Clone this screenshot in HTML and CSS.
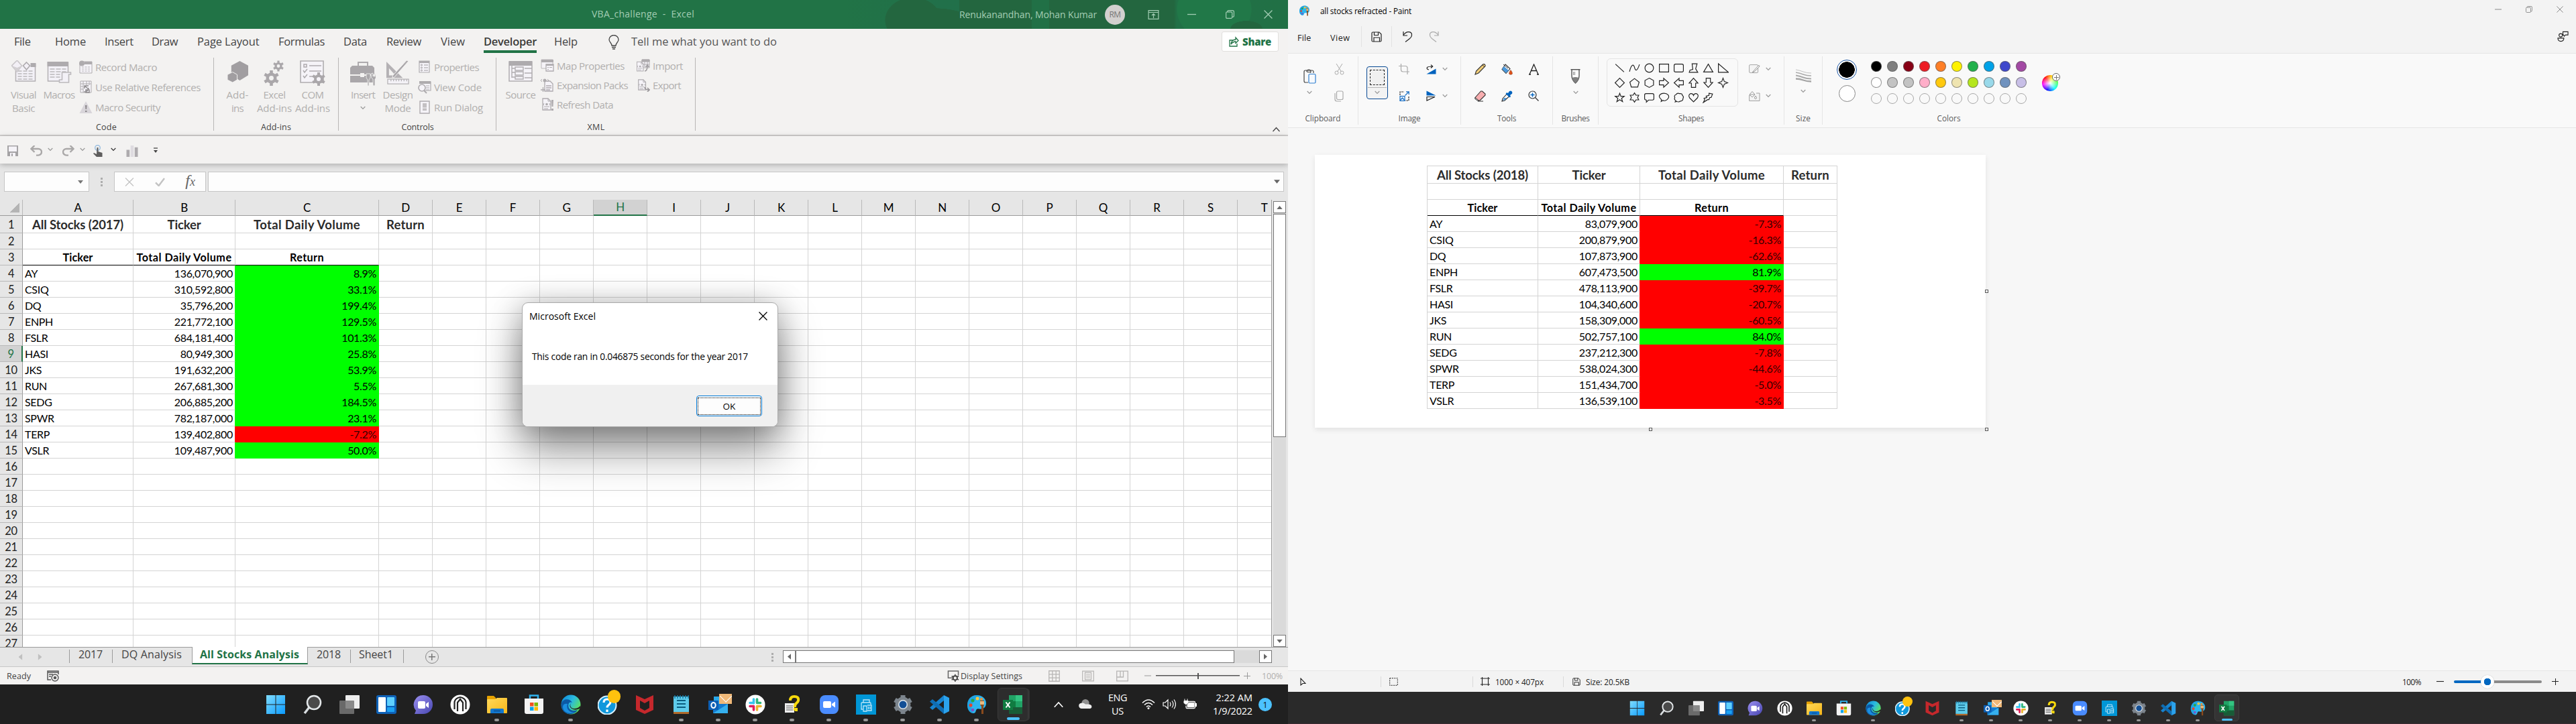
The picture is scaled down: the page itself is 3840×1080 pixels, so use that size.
FILE: index.html
```html
<!DOCTYPE html>
<html lang="en">
<head>
<meta charset="utf-8">
<title>Desktop</title>
<link rel="stylesheet" href="styles.css">
</head>
<body>
<svg class="defs" aria-hidden="true">
<defs>
<linearGradient id="gwin" x1="0" y1="0" x2="1" y2="1"><stop offset="0" stop-color="#7fdcff"/><stop offset="1" stop-color="#0a9bff"/></linearGradient>
<linearGradient id="gchat" x1="0" y1="0" x2="1" y2="1"><stop offset="0" stop-color="#9b8ff0"/><stop offset="1" stop-color="#4746b0"/></linearGradient>
<linearGradient id="gedge" x1="0" y1="0" x2="1" y2=".6"><stop offset="0" stop-color="#0a84d8"/><stop offset=".55" stop-color="#2bbbe0"/><stop offset="1" stop-color="#5fe35a"/></linearGradient>
<linearGradient id="gfold" x1="0" y1="0" x2="1" y2="1"><stop offset="0" stop-color="#ffd95a"/><stop offset="1" stop-color="#f7b61a"/></linearGradient>
</defs>
<!-- ribbon -->
<symbol id="vb" viewBox="0 0 36 34"><path d="M6 12v19h29V5" fill="#f3f1f7" stroke="#b3b0b3" stroke-width="1.5"/><path d="M28 4h8v6h-8z" fill="#aeabae"/><path d="M9 16h23M9 20h23M9 24h23M9 28h23" stroke="#bbb8bb" stroke-width="1.4" stroke-dasharray="6 2"/><path d="M8 0l7 8-7 9-8-9z" fill="#f3f0f6" stroke="#c9c6c9" stroke-width="1.6"/><path d="M0 8l8 3v6zM15 8l-7 3v6z" fill="#d3d0d3"/><path d="M22 3l5 5-5 6-5-6z" fill="#f3f0f6" stroke="#aeabae" stroke-width="1.6"/></symbol>
<symbol id="macros" viewBox="0 0 36 34"><path d="M1 3h30v28H1z" fill="#f3f1f7" stroke="#b3b0b3" stroke-width="1.5"/><path d="M0 2h31v7H0z" fill="#aeabae"/><path d="M4 13h24M4 17h24M4 21h15M4 25h15" stroke="#bbb8bb" stroke-width="1.5" stroke-dasharray="7 2"/><path d="M22 18h13v3h-3v12H18v-4h4z" fill="#f3f1f7" stroke="#bcb9bc" stroke-width="1.6"/></symbol>
<symbol id="rec" viewBox="0 0 20 20"><path d="M1 5h18v14H1zM5 2h14v3H5z" fill="#f5f3f8" stroke="#b0adb0"/><path d="M8 2h11v4H8z" fill="#aeabae"/><circle cx="4" cy="4.500" r="4" fill="#aeabae"/><path d="M4 10h13M4 13h13M4 16h13" stroke="#b5b2b5" stroke-dasharray="3 1.500"/></symbol>
<symbol id="rel" viewBox="0 0 20 20"><path d="M2 1h16v17H2zM6 1v17M11 1v6M2 5h16M2 9h4M2 13h4M15 1v6" fill="#f5f3f8" stroke="#aeabae"/><path d="M7 17q7 0 7-6M14 8H8v4M8 8l6 5M10 14h5v4h-5z" fill="none" stroke="#8f8c8f" stroke-width="1.500"/></symbol>
<symbol id="warn" viewBox="0 0 20 20"><path d="M10 1l9.500 18H.5z" fill="#d8d5da"/><path d="M9 7h2.500l-.5 6H9.500zM9 15h2.500v2H9z" fill="#8a878a"/></symbol>
<symbol id="hexes" viewBox="0 0 32 34"><path d="M19 1l13 7v15l-13 8-13-8V8z" fill="#a19ea1"/><path d="M8 18l7 4v8l-7 4-8-4v-8z" fill="#a19ea1" stroke="#f3f2f1" stroke-width="1"/></symbol>
<symbol id="gear" viewBox="0 0 20 20"><circle cx="10" cy="10" r="5" fill="none" stroke="#aaa7aa" stroke-width="4"/><path d="M10 0v4M10 16v4M1.300 5l3.500 2M15.200 13l3.500 2M1.300 15l3.500-2M15.200 7l3.500-2" stroke="#aaa7aa" stroke-width="4"/></symbol>
<symbol id="gears" viewBox="0 0 32 38"><use href="#gear" x="14" y="0" width="16" height="17"/><use href="#gear" x="0" y="15" width="23" height="23"/></symbol>
<symbol id="com" viewBox="0 0 38 38"><path d="M1 1h34v32H1z" fill="#f5f3f8" stroke="#b0adb0" stroke-width="1.600"/><path d="M6 6h4v4H6zM14 8h18M14 16h18M14 24h8M5 15l2 3 4-5M5 23l2 3 4-5" fill="none" stroke="#aeabae" stroke-width="1.500"/><use href="#gear" x="18" y="18" width="20" height="20"/></symbol>
<symbol id="toolbox" viewBox="0 0 38 38"><path d="M12 8V3h14v5" fill="none" stroke="#aeabae" stroke-width="2"/><path d="M3 8h30l3 3v10H0V11zM0 23h36v10H0z" fill="#aaa7aa"/><path d="M15 19h6v6h-6z" fill="#f3f2f1"/><path d="M24 20v6l2 3v9h2v-9l2-3v-6zM31 20q0 7 3 8v9q2 2 3 0v-9q3-2 0-9v5h-3v-5z" fill="#aaa7aa" stroke="#f3f2f1" stroke-width=".8"/></symbol>
<symbol id="design" viewBox="0 0 38 38"><path d="M1 2v25h25zM5 12l10 11H5z" fill="#b4b1b4" fill-rule="evenodd"/><path d="M35 1l-22 25-3 1 1-4L32 0z" fill="#aaa7aa" stroke="#f3f2f1"/><path d="M3 29h32v7H3zM8 29v3M12 29v3M16 29v3M20 29v3M24 29v3M28 29v3M32 29v3" fill="#f5f3f8" stroke="#b4b1b4" stroke-width="1.300"/></symbol>
<symbol id="props" viewBox="0 0 20 20"><path d="M2 1h15v17H2z" fill="#f5f3f8" stroke="#b0adb0" stroke-width="1.200"/><path d="M2 1h15v3H2z" fill="#aeabae"/><path d="M9 7h6M9 11h6M9 15h6" stroke="#9f9c9f"/><g fill="none" stroke="#a5a2a5"><circle cx="5.500" cy="7" r="1"/><circle cx="5.500" cy="11" r="1"/><circle cx="5.500" cy="15" r="1"/></g></symbol>
<symbol id="code" viewBox="0 0 20 20"><path d="M2 2h17v13H8" fill="#f5f3f8" stroke="#b0adb0" stroke-width="1.200"/><path d="M2 1h17v4H2z" fill="#aeabae"/><path d="M12 8h5M12 11h5M12 14h5" stroke="#b0adb0"/><circle cx="6" cy="11" r="5" fill="#f5f3f8" stroke="#aeabae" stroke-width="1.600"/><path d="M9 15l4 4" stroke="#aeabae" stroke-width="2"/></symbol>
<symbol id="dlg" viewBox="0 0 20 20"><path d="M3 1h14v18H3z" fill="#f5f3f8" stroke="#aeabae" stroke-width="1.400"/><path d="M7 4h6v11H7z" fill="#c3c0c3"/><path d="M6 11h8" stroke="#f5f3f8"/></symbol>
<symbol id="source" viewBox="0 0 36 34"><path d="M1 2h34v29H1z" fill="#f5f3f8" stroke="#b0adb0" stroke-width="1.500"/><path d="M1 1h34v7H1z" fill="#aeabae"/><path d="M5 1v25M5 12h5M5 18h5M5 25h5M10 10h12v5H10zM10 17h12v5H10zM10 24h12v4H10zM24 12h11M24 19h11M24 26h11" fill="none" stroke="#b0adb0" stroke-width="1.400"/></symbol>
<symbol id="map" viewBox="0 0 20 20"><path d="M1 1h17v13H1z" fill="#f5f3f8" stroke="#bbb8bb"/><path d="M1 1h18v4H1z" fill="#aeabae"/><path d="M8 8h11v10H8z" fill="#f5f3f8" stroke="#aeabae" stroke-width="1.300"/><path d="M8 8h11v2H8zM10 12h2v1h-2zM13 12h4v1h-4zM10 15h2v1h-2z" fill="#aeabae"/></symbol>
<symbol id="xdoc" viewBox="0 0 20 20"><path d="M3 1h8l4 4v13H3z" fill="#f5f3f8" stroke="#aeabae" stroke-width="1.300"/><path d="M11 1v4h4M5 13h8M5 16h6M5 8l-1 2 1 1M13 8l1 2-1 1" fill="none" stroke="#aeabae"/><circle cx="9" cy="9.500" r="1.800" fill="#aeabae"/></symbol>
<symbol id="expd" viewBox="0 0 20 20"><path d="M6 4h8l4 4v11H6z" fill="#f5f3f8" stroke="#aeabae" stroke-width="1.300"/><path d="M8 11h8M8 14h8M8 17h6M0 17h7M3.500 13v7" stroke="#aeabae" stroke-width="1.300"/><circle cx="6" cy="3" r="2.500" fill="#aeabae"/><path d="M2 1L0 3l2 2M10 1l2 2-2 2" stroke="#aeabae" fill="none"/></symbol>
<symbol id="refr" viewBox="0 0 20 20"><use href="#xdoc" width="20" height="20"/><path d="M16 3h3l-.5 10h-2zM16 16h3v3h-3z" fill="#aeabae"/></symbol>
<symbol id="imp" viewBox="0 0 20 20"><path d="M8 1h11v12H8z" fill="#f5f3f8" stroke="#aeabae"/><path d="M8 1h11v3H8zM12 4v8M16 4v8M8 8h11" stroke="#aeabae" fill="#aeabae"/><use href="#xdoc" x="-2" y="3" width="16" height="17"/><path d="M12 18q4 0 4-8m-2.500 2L16 9l2.500 3" fill="none" stroke="#a09da0" stroke-width="1.500"/></symbol>
<symbol id="exp" viewBox="0 0 20 20"><use href="#xdoc" width="18" height="20"/><path d="M12 13q0 4 6 4m-2-3l3 3-3 3" fill="none" stroke="#9a979a" stroke-width="1.600"/></symbol>
<symbol id="bulb" viewBox="0 0 16 22"><path d="M5 16c0-4-4-5-4-9a7 6.500 0 0114 0c0 4-4 5-4 9zM5 18.500h6M6 21h4" fill="none" stroke="#444" stroke-width="1.300"/></symbol>
<!-- window and quick access glyphs -->
<symbol id="chev" viewBox="0 0 8 6"><path d="M.7 1l3.300 3.500L7.300 1" fill="none" stroke="currentColor" stroke-width="1.200"/></symbol>
<symbol id="chevup" viewBox="0 0 12 8"><path d="M1 7l5-5.500L11 7" fill="none" stroke="currentColor" stroke-width="1.300"/></symbol>
<symbol id="floppy" viewBox="0 0 16 16"><path d="M0 0h16v16H0z" fill="#a5a3a5"/><path d="M2 1.500h12V9H2z" fill="#f5f3f8"/><path d="M4 11h8v5H4z" fill="#f5f3f8"/><path d="M6 12h2v4H6z" fill="#a5a3a5"/></symbol>
<symbol id="undo" viewBox="0 0 18 16"><path d="M1.500 5H12a5 4.800 0 010 9.600H9M6.500 0L1.500 5l5 5" fill="none" stroke="currentColor" stroke-width="2.400"/></symbol>
<symbol id="touch" viewBox="0 0 14 18"><circle cx="6.500" cy="4.500" r="3.800" fill="none" stroke="#9cbfe0" stroke-width="1.500"/><path d="M5.500 4h2v6l6 2v6H5l-5-5 1-1 4 2z" fill="#5f5e5e"/></symbol>
<symbol id="bars" viewBox="0 0 18 18"><path d="M0 7h5v11H0zM13 3h5v15h-5z" fill="#aeabae"/><path d="M6.500 0h5v18h-5z" fill="#dedbe0"/></symbol>
<symbol id="more" viewBox="0 0 8 10"><path d="M1 1h6" stroke="#444" stroke-width="1.300"/><path d="M1 4h6L4 8z" fill="#444"/></symbol>
<symbol id="min" viewBox="0 0 12 12"><path d="M0 6h12" stroke="currentColor" stroke-width="1.200"/></symbol>
<symbol id="restore" viewBox="0 0 12 12"><path d="M2.500 2.500V1.800Q2.700.6 4 .6h5.500q2 0 2 2V8q0 1.600-2 1.600M.6 4Q.6 2.600 2 2.600h5.500Q9 2.600 9 4v6q0 1.400-1.500 1.400H2Q.6 11.400.6 10z" fill="none" stroke="currentColor" stroke-width="1.100"/></symbol>
<symbol id="close" viewBox="0 0 12 12"><path d="M.5.5l11 11M11.500.5l-11 11" stroke="currentColor" stroke-width="1.200"/></symbol>
<symbol id="ribopt" viewBox="0 0 16 14"><path d="M.6.6h14.800v12.800H.6zM.6 3.500h14.800M8 12V6M5.500 8L8 5.500 10.500 8" fill="none" stroke="currentColor" stroke-width="1.200"/></symbol>
<symbol id="share" viewBox="0 0 15 16"><path d="M6 6H1v9h11v-4M3 12q1-7 7-7V2l4 4.500-4 4V8Q6 8 3 12z" fill="none" stroke="#217346" stroke-width="1.300"/></symbol>
<symbol id="tri" viewBox="0 0 10 6"><path d="M0 0h10L5 6z" fill="currentColor"/></symbol>
<symbol id="tick" viewBox="0 0 16 14"><path d="M1 8l5 5L15 1" fill="none" stroke="#c3c3c3" stroke-width="2.600"/></symbol>
<symbol id="recs" viewBox="0 0 18 17"><path d="M1 1h16v2H1zM1 1v13h5M17 1v5M3 6h6M3 9h3" fill="none" stroke="#555" stroke-width="1.500"/><circle cx="12" cy="11" r="5" fill="#f3f2f1" stroke="#555" stroke-width="1.400"/><circle cx="12" cy="11" r="2.300" fill="#555"/></symbol>
<symbol id="disp" viewBox="0 0 18 18"><path d="M9 12H1V1h16v7" fill="none" stroke="#666" stroke-width="1.600"/><g fill="none" stroke="#444"><circle cx="12" cy="12" r="3.300" stroke-width="2"/><path d="M12 6v3M12 15v3M6.500 9l2.500 1.500M15 13.500l2.500 1.500M6.500 15L9 13.500M15 10.500L17.500 9" stroke-width="1.600"/></g></symbol>
<symbol id="v1" viewBox="0 0 16 16"><path d="M.7.7h14.600v14.600H.7zM5.500.7v14.600M10.500.7v14.600M.7 5.500h14.600M.7 10.500h14.600" fill="none" stroke="#b7b5b4" stroke-width="1.200"/></symbol>
<symbol id="v2" viewBox="0 0 18 16"><path d="M.7.7h16.600v14.600H.7zM4.500 2.700h9v10.600h-9zM6 5.500h6M6 8h6M6 10.500h6" fill="none" stroke="#b7b5b4" stroke-width="1.200"/></symbol>
<symbol id="v3" viewBox="0 0 18 16"><path d="M.7.7h16.600v14.600H.7zM.7 9.500h9.800V.7M6 .7v8.800M10.500 9.500" fill="none" stroke="#b7b5b4" stroke-width="1.300"/></symbol>
<!-- Paint -->
<symbol id="ppal" viewBox="0 0 30 30"><path d="M15 1C6 1 1 8 1 16s5 12 9 12c4 0 3-4 5-6s5 1 9-1c3-1 5-4 5-8 0-7-6-12-14-12z" fill="#2db5ee"/><path d="M15 1C6 1 1 8 1 16s5 12 9 12q-6-8 0-17t12-9q-4-1-7-1z" fill="#1090d8" opacity=".45"/><circle cx="16" cy="6" r="2.500" fill="#ffc83d"/><circle cx="9" cy="9" r="2.500" fill="#28a745"/><circle cx="6" cy="16" r="2.500" fill="#e8442c"/><circle cx="9" cy="23" r="2.300" fill="#7d4fc5"/><circle cx="22" cy="7" r="2" fill="#f59331"/><path d="M20 9h6v6l-1 3v11h-3V18l-2-3z" fill="#8a4a1c"/><path d="M20 10h6v5h-6z" fill="#e9b87c"/></symbol>
<symbol id="psave" viewBox="0 0 16 16"><path d="M1 2.500Q1 1 2.500 1H12l3 3v9.500q0 1.500-1.500 1.500h-11Q1 15 1 13.500zM4.500 1v4.500h6V1M4 15V9h8.500v6" fill="none" stroke="#222" stroke-width="1.200"/></symbol>
<symbol id="pundo" viewBox="0 0 15 17"><path d="M1 1v6h6M1 6.500C6-1 14 1 13.500 6.500q0 2.500-3 5L4 16.500" fill="none" stroke="currentColor" stroke-width="1.200"/></symbol>
<symbol id="paste" viewBox="0 0 19 22"><path d="M7 20H3q-2 0-2-2V4q0-2 2-2h10q2 0 2 2v2M5 3.500Q5 1 8 1t3 2.500-1 1H6z" fill="none" stroke="#444" stroke-width="1.200"/><rect x="8" y="7.500" width="10" height="13.500" rx="1.500" fill="#f6f9fd" stroke="#2f7fd0" stroke-width="1.200"/></symbol>
<symbol id="cut" viewBox="0 0 15 17"><path d="M3 0l7.500 12M12 0L4.500 12" stroke="#aaa"/><circle cx="3.500" cy="13.500" r="2.500" fill="none" stroke="#aaa"/><circle cx="11.500" cy="13.500" r="2.500" fill="none" stroke="#aaa"/></symbol>
<symbol id="copy" viewBox="0 0 14 17"><rect x="3.500" y="1" width="9.500" height="12.500" rx="2" fill="none" stroke="#aaa" stroke-width="1.200"/><path d="M1 4v9q0 3 3 3h6" fill="none" stroke="#aaa" stroke-width="1.200"/></symbol>
<symbol id="crop" viewBox="0 0 16 16"><path d="M0 3.500h10q3 0 3 3V16M3.500 0v9q0 3 3 3H16" fill="none" stroke="#aaa" stroke-width="1.200"/></symbol>
<symbol id="resize" viewBox="0 0 15 15"><path d="M1 6V1h6M14 8v6H9" fill="none" stroke="#222" stroke-width="1.200" stroke-dasharray="2.500 1"/><rect x="1" y="7.500" width="7" height="7" fill="#eaf3fc" stroke="#1a6fc4" stroke-width="1.200"/><path d="M1 14l3.500-4 3.500 4M8.500 6.500L14 1M10 .8h4.200V5" fill="none" stroke="#1a6fc4" stroke-width="1.200"/></symbol>
<symbol id="rot" viewBox="0 0 15 15"><path d="M14.500 6.500V14.500H.5z" fill="#0063be"/><path d="M4 8Q0 7 1.500 4.500 3 3 9.500 3M7 .6L9.700 3 7 5.500" fill="none" stroke="#222" stroke-width="1.200"/></symbol>
<symbol id="flip" viewBox="0 0 15 16"><path d="M.5.5v7h14z" fill="#0063be"/><path d="M1 15V9.500h12z" fill="none" stroke="#222" stroke-width="1.200"/></symbol>
<symbol id="pencil" viewBox="0 0 17 17"><path d="M1 16l1.500-5L12.500 1q2-.8 3 .3 1 1.200.3 2.700L6 14z" fill="#f1cd78" stroke="#333" stroke-width="1.100"/><path d="M12 2l3 3" stroke="#333"/></symbol>
<symbol id="bucket" viewBox="0 0 17 17"><path d="M6 1l7 6.500-6 7-6-6z" fill="#fff" stroke="#333" stroke-width="1.100"/><path d="M4 4l7 6-4 4-6-6z" fill="#4b97da"/><path d="M3 1l7 6" stroke="#333"/><path d="M14 9.500q5 6.500 0 6.800-5-.3 0-6.800z" fill="#e0521b" stroke="#7a2a0a" stroke-width=".5"/></symbol>
<symbol id="letter" viewBox="0 0 15 17"><path d="M1 16L7.500 1 14 16M3.500 10.500h8M0 16h3M12 16h3" fill="none" stroke="#222" stroke-width="1.300"/></symbol>
<symbol id="eraser" viewBox="0 0 17 17"><path d="M1 10.500L9.500 1h2L16 5v2L8 15H5.500L1 12z" fill="#f8aeb0" stroke="#333" stroke-width="1.100"/><path d="M1 10.500l6 5H5L1 12.500z" fill="#fff" stroke="#333"/><path d="M5 16h8" stroke="#333"/></symbol>
<symbol id="picker" viewBox="0 0 17 17"><path d="M1 16l1-4 6.500-7 3.500 3.500L5 15z" fill="#fff" stroke="#333" stroke-width="1.100"/><path d="M4 11h4l-3 3.500H2z" fill="#4b97da"/><path d="M8 3l2 1 2-3q3-1.500 4 1t-1 3.500l-2 1.500 1 2-1.500 1.500L6.500 5z" fill="#0063be"/></symbol>
<symbol id="mag" viewBox="0 0 16 16"><circle cx="6.500" cy="6.500" r="5.500" fill="#f4f9fe" stroke="#333" stroke-width="1.200"/><path d="M10.500 10.500L15.500 15.500" stroke="#333" stroke-width="1.300"/><path d="M6.500 3.500v6M3.500 6.500h6" stroke="#0063be" stroke-width="1.300"/></symbol>
<symbol id="brush" viewBox="0 0 14 22"><path d="M0 .8h14M1.500 1v9q0 6 5.500 11 5.500-5 5.500-11V1" fill="#fff" stroke="#555" stroke-width="1.400"/><path d="M2 13q5-2 10 0-1 4-5 8-4-4-5-8z" fill="#808080"/><path d="M4 4v5M6 4v5" stroke="#888"/></symbol>
<symbol id="sout" viewBox="0 0 17 14"><rect x=".6" y=".6" width="13" height="12" rx="1.500" fill="#f4f4f4" stroke="#a6a6a6"/><path d="M6 11l8-9q2-1 2 1L8 11l-3 1z" fill="#fafafa" stroke="#999"/></symbol>
<symbol id="sfill" viewBox="0 0 17 15"><path d="M4 6H.6v8.400H16V3h-5" fill="#f4f4f4" stroke="#a0a0a0"/><path d="M5 .5L9 5 5 9 1 5zM1 5h8M10 7q3 4 0 4.500-3-.5 0-4.500z" fill="#fafafa" stroke="#999"/></symbol>
<symbol id="size" viewBox="0 0 23 20"><path d="M0 1q6 1 11 3t12 2" fill="none" stroke="#bbb" stroke-width=".9"/><path d="M0 5q6 1 11 3t12 2" fill="none" stroke="#aaa" stroke-width="1.400"/><path d="M0 9.500q6 1 11 3t12 2" fill="none" stroke="#aaa" stroke-width="2"/><path d="M0 14.500q6 0 11 2t12 2" fill="none" stroke="#a5a5a5" stroke-width="2.300"/></symbol>
<symbol id="fb" viewBox="0 0 18 17"><circle cx="5.500" cy="6.500" r="2.700" fill="none" stroke="#222" stroke-width="1.200"/><path d="M1 11h9.500q0 5-4.700 5T1 11zM9 1h8v5h-4l-2 2-1-2H9z" fill="none" stroke="#222" stroke-width="1.200"/></symbol>
<symbol id="cur" viewBox="0 0 9 12"><path d="M1 1v10l3-2.500h4z" fill="none" stroke="#222" stroke-width="1.100"/></symbol>
<symbol id="dash" viewBox="0 0 13 12"><rect x=".7" y=".7" width="11.600" height="10.600" fill="none" stroke="#222" stroke-dasharray="2 1.300"/></symbol>
<symbol id="dims" viewBox="0 0 14 13"><path d="M2.500 0v13M11.500 0v13M0 2h14M0 11h14" stroke="#222" stroke-width="1.100"/></symbol>
<!-- Paint shapes -->
<symbol id="s0" viewBox="0 0 16 16"><path d="M2 2.500l12 11"/></symbol>
<symbol id="s1" viewBox="0 0 16 16"><path d="M1 13C4 1 7 3 8 7s3 8 7-4"/></symbol>
<symbol id="s2" viewBox="0 0 16 16"><circle cx="8" cy="8" r="6"/></symbol>
<symbol id="s3" viewBox="0 0 16 16"><path d="M1.500 2.500h13v11h-13z"/></symbol>
<symbol id="s4" viewBox="0 0 16 16"><rect x="1.500" y="2.500" width="13" height="11" rx="2"/></symbol>
<symbol id="s5" viewBox="0 0 16 16"><path d="M6 2h7l-2 7 3 5H2l1-3 4-1z"/></symbol>
<symbol id="s6" viewBox="0 0 16 16"><path d="M8 2.500L14.500 13.500h-13z"/></symbol>
<symbol id="s7" viewBox="0 0 16 16"><path d="M1.500 2v12h14z"/></symbol>
<symbol id="s8" viewBox="0 0 16 16"><path d="M8 1.500L14.500 8 8 14.500 1.500 8z"/></symbol>
<symbol id="s9" viewBox="0 0 16 16"><path d="M8 2l6.500 5-2 7h-9l-2-7z"/></symbol>
<symbol id="s10" viewBox="0 0 16 16"><path d="M8 1.500l6 3.300v6.400l-6 3.300-6-3.300V4.800z"/></symbol>
<symbol id="s11" viewBox="0 0 16 16"><path d="M1.500 5h6V1.800L14.500 8l-7 6.200V11h-6z"/></symbol>
<symbol id="s12" viewBox="0 0 16 16"><path d="M14.500 5h-6V1.800L1.500 8l7 6.200V11h6z"/></symbol>
<symbol id="s13" viewBox="0 0 16 16"><path d="M5 14.500v-6H1.800L8 1.500l6.200 7H11v6z"/></symbol>
<symbol id="s14" viewBox="0 0 16 16"><path d="M5 1.500v6H1.800L8 14.500l6.200-7H11v-6z"/></symbol>
<symbol id="s15" viewBox="0 0 16 16"><path d="M8 1.500l1.800 4.700L14.500 8 9.800 9.800 8 14.500 6.200 9.800 1.500 8l4.700-1.800z"/></symbol>
<symbol id="s16" viewBox="0 0 16 16"><path d="M8 2l1.600 4.300h4.700l-3.700 2.900 1.400 4.600L8 11l-4 2.800 1.400-4.600L1.700 6.300h4.700z"/></symbol>
<symbol id="s17" viewBox="0 0 16 16"><path d="M8 1.500l2 3.200h4L12.300 8l1.700 3.300h-4L8 14.500l-2-3.200H2L3.700 8 2 4.700h4z"/></symbol>
<symbol id="s18" viewBox="0 0 16 16"><path d="M3.500 2.500h9q2 0 2 2v5q0 2-2 2H7l-3 3v-3q-2.500 0-2.500-2v-5q0-2 2-2z"/></symbol>
<symbol id="s19" viewBox="0 0 16 16"><path d="M4 13.500l.5-2.500C-2 6 3 2 8 2s8 3.500 6 7-6 4-7.500 3z"/></symbol>
<symbol id="s20" viewBox="0 0 16 16"><path d="M3 14l1-1.500Q1 11 2.500 8 1 5 4 4q2-3 5-1.500 4-.5 4 2.500 2.500 2 1 4 0 4-3.500 4-3 2-5 .5z"/></symbol>
<symbol id="s21" viewBox="0 0 16 16"><path d="M8 14L2.500 8.500Q0 4 4 2.500q3-.5 4 2.500 1-3 4-2.500 4 1.500 1.500 6z"/></symbol>
<symbol id="s22" viewBox="0 0 16 16"><path d="M9 2l5 1-2 5h-2l-1 3H7l-6 4 2-4-1-2 4-1-1-2 4-1z"/></symbol>
<!-- taskbar -->
<symbol id="t-win" viewBox="0 0 30 30"><path d="M1 1h13.500v13.500H1zM15.500 1H29v13.500H15.500zM1 15.500h13.500V29H1zM15.500 15.500H29V29H15.500z" fill="url(#gwin)"/></symbol>
<symbol id="t-search" viewBox="0 0 30 30"><path d="M10 19l-7 9" stroke="#d8dde0" stroke-width="3.500"/><circle cx="17" cy="12" r="10" fill="#4a4a4a" stroke="#e4e8ea" stroke-width="2.500"/></symbol>
<symbol id="t-view" viewBox="0 0 30 30"><rect x="9" y="1" width="21" height="20" rx="1" fill="#eee"/><rect y="9" width="22" height="20" rx="1" fill="#777" opacity=".85"/></symbol>
<symbol id="t-widg" viewBox="0 0 30 30"><rect y="1" width="30" height="28" rx="3" fill="#0e62b8"/><rect x="3" y="4" width="11" height="22" rx="1" fill="#fff"/><rect x="16" y="4" width="11" height="13" rx="1" fill="#5fd0ff"/><rect x="16" y="19" width="11" height="7" rx="1" fill="#1ba1f3"/></symbol>
<symbol id="t-chat" viewBox="0 0 30 30"><path d="M15 1a14 14 0 110 28H2l2-5A14 14 0 0115 1z" fill="url(#gchat)"/><rect x="7" y="10" width="11" height="11" rx="2" fill="#fff"/><path d="M19 14l4-3v9l-4-3z" fill="#fff"/></symbol>
<symbol id="t-arch" viewBox="0 0 30 30"><circle cx="15" cy="15" r="14.500" fill="#fff"/><path d="M11 25V12l4-5 4 5v13M6.500 22V11q1.500-6 8.500-7 7 1 8.500 7v11" fill="none" stroke="#222" stroke-width="2.200"/></symbol>
<symbol id="t-fold" viewBox="0 0 30 30"><path d="M0 3q0-1 1-1h9l3 3v5H0z" fill="#e6a100"/><path d="M0 8q0-1 1-1h11l3-2h14q1 0 1 1v21q0 1-1 1H1q-1 0-1-1z" fill="url(#gfold)"/><path d="M5 28v-5q0-2 2-2h16q2 0 2 2v5z" fill="#1277cf"/><path d="M10 24.500h10" stroke="#0a4e90" stroke-width="1.500"/></symbol>
<symbol id="t-store" viewBox="0 0 30 30"><path d="M9 6V1.500h12V6" fill="none" stroke="#2fb4f0" stroke-width="2.500"/><path d="M1 6h28v20q0 3-3 3H4q-3 0-3-3z" fill="#f4f4f4"/><path d="M9 12h5.500v5.500H9z" fill="#f25022"/><path d="M15.500 12H21v5.500h-5.500z" fill="#7fba00"/><path d="M9 18.500h5.500V24H9z" fill="#00a4ef"/><path d="M15.500 18.500H21V24h-5.500z" fill="#ffb900"/></symbol>
<symbol id="t-edge" viewBox="0 0 30 30"><circle cx="15" cy="15" r="14.500" fill="url(#gedge)"/><path d="M1 13C4 5 14 6 17 12c-5-2-7 3-5 8 2 4 8 5 13 3-4 7-14 8-20 3Q0 21 1 13z" fill="#0c59a4"/><path d="M17 12c-5 2-3 9 3 9 3 0 6-1 9-4l1 3q-8 5-14 1c-4-3-3-7 1-9z" fill="#222"/><path d="M10 14c-3 8 4 14 11 12-6 4-18 2-18-8q1-5 7-4z" fill="#1b8fe0"/></symbol>
<symbol id="t-help" viewBox="0 0 30 30"><circle cx="14" cy="16" r="13.500" fill="#1098dc" stroke="#d9f0fc" stroke-width="2"/><path d="M9 12q0-5 5-5t5 4.500c0 4-5 3.500-5 8M14 22.500v3.500" fill="none" stroke="#fff" stroke-width="3.200"/></symbol>
<symbol id="t-mc" viewBox="0 0 30 30"><path d="M2 1l13 6 13-6v22l-13 6-13-6zM8 9v11l7 4 7-4V9l-7 4z" fill="#c5282c" fill-rule="evenodd"/></symbol>
<symbol id="t-note" viewBox="0 0 30 30"><path d="M3 3h23v23H3z" fill="#5ecbea"/><path d="M3 26h23v3H3z" fill="#b0692a"/><path d="M8 9h13M8 14h13M8 19h13" stroke="#0b5d80" stroke-width="1.800"/><path d="M5 1v5M9 1v5M13 1v5M17 1v5M21 1v5M25 1v5" stroke="#137aa6" stroke-width="1.500"/></symbol>
<symbol id="t-out" viewBox="0 0 30 30"><path d="M8 3h18v13H8z" fill="#28a8ea"/><path d="M7 14h22v14H7z" fill="#1279cf"/><path d="M7 28l22-14v14z" fill="#35b0ee"/><path d="M0 9h15v14H0z" fill="#0c5fb5"/><ellipse cx="7.500" cy="16" rx="3.200" ry="4" fill="none" stroke="#fff" stroke-width="2"/></symbol>
<symbol id="t-slack" viewBox="0 0 30 30"><circle cx="15" cy="15" r="14.500" fill="#fff"/><g stroke-width="3.600" stroke-linecap="round"><path d="M12.500 7v6M7 12.500h5" stroke="#36c5f0"/><path d="M17.500 7v5M17.500 12.500h5" stroke="#2eb67d"/><path d="M17.500 17.500h5.500M17.500 18v5" stroke="#ecb22e"/><path d="M7 17.500h5.500M12.500 18v5" stroke="#e01e5a"/></g></symbol>
<symbol id="t-qdoc" viewBox="0 0 30 30"><path d="M4 13h14v14H4z" fill="#eee"/><path d="M6 17h10M6 20h10M6 23h10" stroke="#555" stroke-width="1.200"/><path d="M12 9q0-6 6-6 7 0 6 6c-1 5-6 3-5 10M17 22h4v3" fill="none" stroke="#f7d90c" stroke-width="4"/></symbol>
<symbol id="t-zoom" viewBox="0 0 30 30"><rect x="1" y="1" width="28" height="28" rx="8" fill="#4a8cff"/><rect x="6" y="10" width="12" height="10" rx="2" fill="#fff"/><path d="M19 14l5-3.500v9L19 16z" fill="#fff"/></symbol>
<symbol id="t-prn" viewBox="0 0 30 30"><path d="M0 0h30v30H0z" fill="#0096d6"/><path d="M11 12V8h9v4M10 22H8v-9q0-1 1-1h12q1 0 1 1v2M11 17h5v8h-5zM17 16h6v8h-6M18.500 18v4M21 18v4" fill="none" stroke="#bfe6f8" stroke-width="1.300"/></symbol>
<symbol id="t-set" viewBox="0 0 30 30"><g stroke="#7d858d" fill="#7d858d"><circle cx="15" cy="15" r="11"/><path d="M15 1v28M3 8l24 14M3 22L27 8" stroke-width="7"/></g><circle cx="15" cy="15" r="7" fill="#dfe6ec"/><circle cx="15" cy="15" r="5.500" fill="#134f96"/></symbol>
<symbol id="t-code" viewBox="0 0 30 30"><path d="M21 1l8 4v20l-8 4z" fill="#2ba2ec"/><path d="M21 1v8L4 23l-4-3.500z" fill="#1683cf"/><path d="M21 29v-8L4 7 0 10.500z" fill="#0f6db3"/></symbol>
<symbol id="t-xl" viewBox="0 0 30 30"><path d="M9 1h20v28H9z" fill="#21a366"/><path d="M19 1h10v9H19z" fill="#33c481"/><path d="M9 19h20v10H9z" fill="#185c37"/><path d="M9 10h10v9H9z" fill="#107c41"/><path d="M0 8h15v15H0z" fill="#107c41"/><path d="M4.500 11.500l6 8M10.500 11.500l-6 8" stroke="#fff" stroke-width="2"/></symbol>
<symbol id="cloud" viewBox="0 0 22 16"><circle cx="11" cy="6" r="6" fill="#8f8f8f"/><path d="M5 15a4.500 4.500 0 010-9q3-1 6 2l4 0q6 0 6 4 0 3-4 3z" fill="#eee"/></symbol>
<symbol id="wifi" viewBox="0 0 20 16"><path d="M1 6q9-9 18 0M4 9q6-6 12 0M7 12q3-3 6 0" fill="none" stroke="#fff" stroke-width="1.500"/><circle cx="10" cy="14" r="1.500" fill="#fff"/></symbol>
<symbol id="vol" viewBox="0 0 20 16"><path d="M1 5.500h3l4-4v13l-4-4H1zM11 5q2 3 0 6M14 3q4 5 0 10M17 1q5 7 0 14" fill="none" stroke="#fff" stroke-width="1.200"/></symbol>
<symbol id="bat" viewBox="0 0 20 16"><path d="M7 4h9q1.500 0 1.500 1.500v7Q17.500 14 16 14H5q-1 0-1-2v-2" fill="none" stroke="#fff" stroke-width="1.300"/><path d="M8 6h8v6H6V9zM18 7h2v4h-2zM1 3h6v3L5 8H3L1 6zM2 0v3M6 0v3" fill="#fff" stroke="#fff"/></symbol>
</svg>

<div class="desktop">
<!-- ===== left monitor ===== -->
<section class="screen excel">
  <header class="titlebar">
    <span class="doc" data-w="153">VBA_challenge&nbsp; -&nbsp; Excel</span>
    <div class="account">
      <span data-w="205">Renukanandhan, Mohan Kumar</span>
      <b class="avatar">RM</b>
      <svg width="17" height="14"><use href="#ribopt"/></svg>
      <svg width="13" height="13"><use href="#min"/></svg>
      <svg width="13" height="13"><use href="#restore"/></svg>
      <svg width="13" height="13"><use href="#close"/></svg>
    </div>
  </header>
  <nav class="tabs">
    <span class="c-file"><a data-w="24.500">File</a></span><span class="c-home"><a data-w="46">Home</a></span><span class="c-ins"><a data-w="43">Insert</a></span><span class="c-draw"><a data-w="39">Draw</a></span><span class="c-page"><a data-w="92.500">Page Layout</a></span><span class="c-form"><a data-w="69">Formulas</a></span><span class="c-data"><a data-w="35">Data</a></span><span class="c-rev"><a data-w="52">Review</a></span><span class="c-view"><a data-w="36">View</a></span><span class="c-dev"><a class="on" data-w="79">Developer</a></span><span class="c-help"><a data-w="35">Help</a></span>
    <svg width="16" height="22"><use href="#bulb"/></svg>
    <a class="tell" data-w="217">Tell me what you want to do</a>
    <button class="share"><svg width="15" height="16"><use href="#share"/></svg><b data-w="43">Share</b></button>
  </nav>
  <div class="ribbon">
    <div class="group g-code"><div class="body">
      <div class="big w54"><svg width="37" height="34"><use href="#vb"/></svg><span data-w="38">Visual</span><span data-w="34">Basic</span></div>
      <div class="big w52"><svg width="37" height="34"><use href="#macros"/></svg><span data-w="47">Macros</span></div>
      <div class="list"><div><svg width="20" height="20"><use href="#rec"/></svg><span data-w="92">Record Macro</span></div><div><svg width="20" height="20"><use href="#rel"/></svg><span data-w="157">Use Relative References</span></div><div><svg width="20" height="20"><use href="#warn"/></svg><span data-w="97">Macro Security</span></div></div>
    </div><footer><span data-w="31">Code</span></footer></div>
    <div class="group g-add"><div class="body">
      <div class="big w52"><svg width="31" height="33"><use href="#hexes"/></svg><span data-w="33">Add-</span><span data-w="18">ins</span></div>
      <div class="big w58"><svg width="32" height="38"><use href="#gears"/></svg><span data-w="33">Excel</span><span data-w="52">Add-ins</span></div>
      <div class="big w56"><svg width="38" height="38"><use href="#com"/></svg><span data-w="33">COM</span><span data-w="52">Add-ins</span></div>
    </div><footer><span data-w="45">Add-ins</span></footer></div>
    <div class="group g-ctl"><div class="body">
      <div class="big w52"><svg width="38" height="38"><use href="#toolbox"/></svg><span data-w="36">Insert</span><svg class="dd" width="8" height="6"><use href="#chev"/></svg></div>
      <div class="big w52"><svg width="37" height="37"><use href="#design"/></svg><span data-w="45">Design</span><span data-w="39">Mode</span></div>
      <div class="list"><div><svg width="20" height="20"><use href="#props"/></svg><span data-w="67">Properties</span></div><div><svg width="20" height="20"><use href="#code"/></svg><span data-w="71">View Code</span></div><div><svg width="20" height="20"><use href="#dlg"/></svg><span data-w="73">Run Dialog</span></div></div>
    </div><footer><span data-w="48">Controls</span></footer></div>
    <div class="group g-xml"><div class="body">
      <div class="big w52"><svg width="36" height="34"><use href="#source"/></svg><span data-w="45">Source</span></div>
      <div class="list tight"><div><svg width="20" height="20"><use href="#map"/></svg><span data-w="101">Map Properties</span></div><div><svg width="20" height="20"><use href="#expd"/></svg><span data-w="106">Expansion Packs</span></div><div><svg width="20" height="20"><use href="#refr"/></svg><span data-w="84">Refresh Data</span></div></div>
      <div class="list tight second"><div><svg width="20" height="20"><use href="#imp"/></svg><span data-w="45">Import</span></div><div><svg width="20" height="20"><use href="#exp"/></svg><span data-w="42">Export</span></div></div>
    </div><footer><span data-w="26">XML</span></footer></div>
    <svg class="collapse" width="13" height="8"><use href="#chevup"/></svg>
  </div>
  <div class="qat">
    <svg width="16" height="16"><use href="#floppy"/></svg>
    <svg class="q2" width="18" height="16"><use href="#undo"/></svg><svg class="q3" width="8" height="6"><use href="#chev"/></svg>
    <svg class="q4 mirror" width="18" height="16"><use href="#undo"/></svg><svg class="q3" width="8" height="6"><use href="#chev"/></svg>
    <svg class="q5" width="14" height="18"><use href="#touch"/></svg><svg class="q6" width="8" height="6"><use href="#chev"/></svg>
    <svg class="q7" width="18" height="17"><use href="#bars"/></svg><svg class="q8" width="8" height="10"><use href="#more"/></svg>
  </div>
  <div class="formula">
    <div class="namebox"><svg width="8" height="5"><use href="#tri"/></svg></div>
    <div class="grip"></div>
    <div class="fx"><svg width="16" height="13"><use href="#close"/></svg><svg width="17" height="13"><use href="#tick"/></svg><i>f<small>x</small></i></div>
    <div class="input"><svg width="9" height="6"><use href="#tri"/></svg></div>
  </div>
  <div class="book">
    <div class="cells"><table id="sheet"></table></div>
    <div class="vscroll"><div class="btn"><svg class="up" width="9" height="5"><use href="#tri"/></svg></div><div class="thumb"></div><div class="btn end"><svg width="9" height="5"><use href="#tri"/></svg></div></div>
  </div>
  <div class="sheets">
    <svg class="l" width="11" height="6"><use href="#tri"/></svg><svg class="r" width="11" height="6"><use href="#tri"/></svg>
    <span class="sh s17"><a data-w="36">2017</a></span><span class="sh sdq"><a data-w="90">DQ Analysis</a></span><span class="sh act"><a data-w="148">All Stocks Analysis</a></span><span class="sh s18x"><a data-w="36">2018</a></span><span class="sh s1x"><a data-w="51">Sheet1</a></span>
    <span class="plus"></span>
    <div class="grip g2"></div>
    <div class="hscroll"><div class="btn"><svg class="l2" width="9" height="5"><use href="#tri"/></svg></div><div class="thumb"></div><div class="btn end"><svg class="r2" width="9" height="5"><use href="#tri"/></svg></div></div>
  </div>
  <div class="status">
    <span data-w="36">Ready</span><svg class="rcs" width="18" height="17"><use href="#recs"/></svg>
    <svg class="ds" width="18" height="17"><use href="#disp"/></svg><span data-w="92">Display Settings</span>
    <svg class="vv1" width="17" height="17"><use href="#v1"/></svg><svg class="vv2" width="18" height="17"><use href="#v2"/></svg><svg class="vv2" width="18" height="17"><use href="#v3"/></svg>
    <svg class="mn" width="10" height="10"><use href="#min"/></svg><div class="zoom"></div><em class="pl"></em><span class="pct" data-w="31">100%</span>
  </div>
  <div class="taskbar left"><div class="apps" data-size="30"></div>
    <div class="tray">
      <svg width="16" height="10"><use href="#chevup"/></svg><svg class="cl" width="22" height="15"><use href="#cloud"/></svg>
      <p class="lang"><span data-w="28">ENG</span><span data-w="18">US</span></p>
      <svg width="20" height="17"><use href="#wifi"/></svg><svg width="20" height="17"><use href="#vol"/></svg><svg width="20" height="17"><use href="#bat"/></svg>
      <p class="clock"><span data-w="54.500">2:22 AM</span><span data-w="59">1/9/2022</span></p>
      <b class="count">1</b>
    </div>
  </div>
  <div class="dialog">
    <header><span data-w="99">Microsoft Excel</span><svg width="13" height="13"><use href="#close"/></svg></header>
    <p><span data-w="322">This code ran in 0.046875 seconds for the year 2017</span></p>
    <footer><button><span>OK</span></button></footer>
  </div>
</section>

<!-- ===== right monitor ===== -->
<section class="screen paint">
  <header class="ptitle"><svg width="17" height="16"><use href="#ppal"/></svg><span data-w="136">all stocks refracted - Paint</span>
    <div class="wb"><svg width="10" height="10"><use href="#min"/></svg><svg width="10" height="10"><use href="#restore"/></svg><svg width="10" height="10"><use href="#close"/></svg></div></header>
  <nav class="pmenu"><span class="pf"><a data-w="20.500">File</a></span><span class="pv"><a data-w="29.500">View</a></span><span class="ps"><svg width="16" height="16"><use href="#psave"/></svg></span><svg class="pu" width="15" height="17"><use href="#pundo"/></svg><svg class="pr" width="15" height="17"><use href="#pundo"/></svg><svg class="fbk" width="17" height="17"><use href="#fb"/></svg></nav>
  <div class="pribbon">
    <div class="pg p1"><div class="two">
      <div class="tall"><svg width="19" height="22"><use href="#paste"/></svg><svg class="cv" width="8" height="6"><use href="#chev"/></svg></div>
      <div class="col"><svg width="15" height="17"><use href="#cut"/></svg><svg width="14" height="17"><use href="#copy"/></svg></div>
    </div><footer><span data-w="53">Clipboard</span></footer></div>
    <div class="pg p2"><div class="two">
      <div class="select"><i></i><svg width="8" height="6"><use href="#chev"/></svg></div>
      <div class="col w48"><svg width="16" height="16"><use href="#crop"/></svg><svg width="15" height="15"><use href="#resize"/></svg></div>
      <div class="col w32"><svg width="15" height="15"><use href="#rot"/></svg><svg width="15" height="16"><use href="#flip"/></svg></div>
      <div class="col w9"><svg width="8" height="6"><use href="#chev"/></svg><svg width="8" height="6"><use href="#chev"/></svg></div>
    </div><footer><span data-w="33">Image</span></footer></div>
    <div class="pg p3"><div class="two">
      <div class="col w40"><svg width="17" height="17"><use href="#pencil"/></svg><svg width="17" height="17"><use href="#eraser"/></svg></div>
      <div class="col w40"><svg width="17" height="17"><use href="#bucket"/></svg><svg width="17" height="17"><use href="#picker"/></svg></div>
      <div class="col w40"><svg width="15" height="17"><use href="#letter"/></svg><svg width="16" height="16"><use href="#mag"/></svg></div>
    </div><footer><span data-w="28">Tools</span></footer></div>
    <div class="pg p4"><div class="two"><div class="tall"><svg width="15" height="22"><use href="#brush"/></svg><svg class="cv" width="8" height="6"><use href="#chev"/></svg></div></div><footer><span data-w="42">Brushes</span></footer></div>
    <div class="pg p5"><div class="two"><div class="shapes" id="shapes"></div>
      <div class="col w48"><svg width="17" height="14"><use href="#sout"/></svg><svg width="17" height="15"><use href="#sfill"/></svg></div>
      <div class="col w9b"><svg width="8" height="6"><use href="#chev"/></svg><svg width="8" height="6"><use href="#chev"/></svg></div>
    </div><footer><span data-w="38">Shapes</span></footer></div>
    <div class="pg p6"><div class="two"><div class="tall"><svg width="23" height="20"><use href="#size"/></svg><svg class="cv" width="8" height="6"><use href="#chev"/></svg></div></div><footer><span data-w="22">Size</span></footer></div>
    <div class="pg p7"><div class="two"><div class="fgbg"><i></i><u></u></div><div class="swatches" id="swatches"></div><div class="wheel"><i></i></div></div><footer><span data-w="35">Colors</span></footer></div>
  </div>
  <div class="stage"><div class="canvas"><table id="picture"></table><i class="h hb"></i><i class="h hr"></i><i class="h hc"></i></div></div>
  <div class="pstatus">
    <span class="z1"><svg width="9" height="12"><use href="#cur"/></svg></span><span class="z2"><svg width="13" height="12"><use href="#dash"/></svg></span><span class="z3"><svg width="14" height="13"><use href="#dims"/></svg><a data-w="72">1000 × 407px</a></span><span class="z4"><svg width="12" height="12"><use href="#psave"/></svg><a data-w="65">Size: 20.5KB</a></span>
    <div class="pz"><a data-w="28">100%</a><svg width="11" height="11"><use href="#min"/></svg><div class="slider"><i></i></div><em class="pl"></em></div>
  </div>
  <div class="taskbar right"><div class="apps" data-size="23"></div></div>
</section>
</div>
<script src="main.js"></script>
</body>
</html>
```
FILE: styles.css
```css
*{box-sizing:border-box}
body{margin:0;width:3840px;height:1080px;overflow:hidden;font-family:"Open Sans","Noto Sans",sans-serif;color:#444}
svg{display:block;flex:none}
.defs{position:absolute;width:0;height:0}
p{margin:0}
[data-w]{display:inline-block;white-space:nowrap}
.desktop{display:flex}
.screen{width:1920px;height:1080px;display:flex;flex-direction:column;position:relative;overflow:hidden}
.excel{background:#e6e6e6}

.titlebar{height:43px;flex:none;background:
 radial-gradient(ellipse 42px 34px at 1361px 30px,#23663f 98%,transparent),
 radial-gradient(ellipse 60px 20px at 1390px 32px,#23663f 98%,transparent),
 radial-gradient(ellipse 24px 12px at 1858px 43px,#23663f 98%,transparent),
 radial-gradient(ellipse 56px 48px at 1810px 14px,#217848 98%,transparent),
 linear-gradient(90deg,transparent 1430px,#23663f 1430px,#23663f 1538px,#217046 1538px,#217046 1564px,#23663f 1564px,#23663f 1750px,transparent 1754px),
 linear-gradient(90deg,#217346 1260px,#21704a 1400px,#217045);
 display:flex;align-items:center;padding-left:882px;color:#a3cdb4;font-size:14px}
.doc{width:548px;flex:none;padding-bottom:3px}
.account{display:flex;flex:none;align-items:center;height:43px}
.account>span{width:217px}
.avatar{width:30px;height:30px;border-radius:50%;background:#d2d0ce;color:#777;font-weight:400;font-size:12px;line-height:30px;text-align:center;letter-spacing:-.5px;margin-right:34px}
.account svg{margin-right:44px}
.account svg:nth-of-type(1){margin-right:42px}

.tabs{height:43px;flex:none;background:#f3f2f1;display:flex;padding-left:21px;font-size:16.500px;line-height:37px}
.tabs span{height:37px}
.c-file{width:61px}.c-home{width:74px}.c-ins{width:70px}.c-draw{width:68px}.c-page{width:121px}.c-form{width:97px}.c-data{width:64px}.c-rev{width:81px}.c-view{width:64px}.c-dev{width:105px}.c-help{width:81px}
.on{font-weight:600;border-bottom:4px solid #217346;line-height:37px;height:36px;color:#3b3a39}
.tabs>svg{margin:9px 18px 0 0}
.tell{width:880px;color:#555}
.share{width:85px;height:30px;margin-top:4px;background:#fff;border:1px solid #e1dfdd;border-radius:3px;display:flex;align-items:center;justify-content:center;gap:5px;padding:0;font:600 15px "Open Sans",sans-serif;color:#217346}

.ribbon{height:117px;flex:none;background:#f3f2f1;border-bottom:2px solid #d0cecd;display:flex;position:relative;font-size:15px;color:#b1afae}
.group{height:109px;border-right:1px solid #b9b7b6;display:flex;flex-direction:column}
.g-code{width:319px;padding-left:8px}.g-add{width:186px;padding-left:9px}.g-ctl{width:235px;padding-left:10px}.g-xml{width:297px;padding-left:10px}
.body{display:flex;height:96px;flex:none}
.big{display:flex;flex-direction:column;align-items:center;line-height:20px}
.big>svg:first-child{margin:4px 0 auto}
.big>svg:first-child+span{margin-top:auto}
.big{height:85px;position:relative}
.big span:last-child:nth-child(2){margin-bottom:20px}
.big .dd{margin:7px 0;color:#999}
.w54{width:54px}.w52{width:52px}.w58{width:58px}.w56{width:56px}
.list{margin:-1px 0 0 4px}
.list>div{height:30px;display:flex;align-items:center;gap:4px}
.tight{margin:-3px 0 0 4px}.tight>div{height:29px;gap:4px}
.second{margin-left:13px}
.group footer{margin-left:-9px;text-align:center;font-size:12.500px;line-height:16px;color:#444}
.collapse{position:absolute;right:11px;bottom:4px;color:#444}

.qat{height:41px;flex:none;background:#f3f2f1;display:flex;align-items:center;padding:2px 0 0 11px;color:#aaa8a8;box-shadow:0 2px 8px rgba(0,0,0,.25);z-index:1}
.q2{margin-left:18px}.q3{margin-left:8px;margin-top:-3px;color:#999}.q4{margin-left:14px}.mirror{transform:scaleX(-1)}.q5{margin-left:12px}.q6{margin:-3px 0 0 12px;color:#333}.q7{margin:2px 0 0 15px}.q8{margin-left:22px}
.formula{height:54px;flex:none;display:flex;padding:12px 6px 0}
.formula>div{height:30px;background:#fdfdfd;border:1px solid #c6c6c6;display:flex;align-items:center}
.formula .namebox{width:127px;justify-content:flex-end;padding-right:8px;color:#777}
.formula .grip{width:37px;background:none;border:none}
.grip:before{content:"";display:block;width:3px;height:13px;margin:auto;background:repeating-linear-gradient(#adadad 0 3px,transparent 3px 5px)}
.fx{width:137px;justify-content:space-between;color:#c3c3c3;padding:0 15px 0 14px}
.fx i{font:italic 24px "Liberation Serif",serif;color:#666;margin-top:-4px}.fx small{font-size:18px}
.input{flex:1;margin-left:3px;justify-content:flex-end;padding-right:5px;color:#666}

.book{height:667px;flex:none;display:flex;position:relative}
.cells{width:1896px;height:667px;overflow:hidden;border-right:1px solid #9b9b9b}
table{border-collapse:separate;border-spacing:0;table-layout:fixed;font-family:Lato,"Open Sans",sans-serif;color:#000}
td,th{padding:1px 3px 0;overflow:hidden;white-space:nowrap;font-weight:400;font-size:16px;letter-spacing:-.32px;line-height:20px}
td{border-right:1px solid #d4d4d4;border-bottom:1px solid #d4d4d4;background:#fff}
#sheet{width:1925px}
tr{height:24px}
.cols th{border-bottom:1px solid #9b9b9b;border-right:1px solid #b9b9b9;background:#e6e6e6;font-size:17px;padding:0}
th.rn{background:#e6e6e6;border-right:1px solid #9b9b9b;border-bottom:1px solid #b9b9b9;padding:1px 0 0;font-size:16.500px;color:#222}
.cols th.sel{background:#d2d2d2;color:#217346;border-bottom:2px solid #217346}
th.rn.sel{background:#d2d2d2;color:#217346;border-right:2px solid #217346}
.corner{background:linear-gradient(135deg,transparent 50%,#b4b4b4 50%) 14px 4px/15px 15px no-repeat #e6e6e6!important}
tr.big-row{height:26px}
.big-row td{font-size:18.500px;font-weight:700;text-align:center;color:#2b2b2b}
.head td{font-weight:700;text-align:center;font-size:16.200px}
.head td.u{border-bottom-color:#000}
.num{text-align:right}
td.gain{background:#0f0;border-color:#0f0}td.loss{background:#f00;border-color:#f00;color:#300}
td.bgain{border-right-color:#0f0}td.bloss{border-right-color:#f00}

.btn{background:#fff;border:1px solid #777;display:flex;align-items:center;justify-content:center;color:#666;flex:none}
.thumb{background:#fff;border:1px solid #777}
.vscroll{width:19px;margin:2px 0 0 2px;background:#dadada;display:flex;flex-direction:column;height:665px}
.vscroll .btn{height:18px}.vscroll .end{margin-top:auto}.vscroll .thumb{height:333px;margin-top:1px}
.up{transform:rotate(180deg)}
.sheets{height:30px;flex:none;border-top:1px solid #9b9b9b;border-bottom:1px solid #c6c6c6;display:flex;font-size:16px;line-height:21px;color:#444}
.sheets>.l,.sheets>.r{margin-top:11px;color:#c0c0c0;transform:rotate(90deg)}.sheets>.l{margin-left:25px}.sheets>.r{transform:rotate(-90deg);margin-left:18px}
.sh{height:20px;margin-top:3px;border-left:1px solid #9b9b9b;padding-left:13px;line-height:14px}
.s17{width:64px;margin-left:38px}.sdq{width:119px}
.sh.act{width:173px;background:#fff;color:#217346;font-weight:700;height:26px;margin-top:-1px;padding-left:11px;padding-top:4px;border-bottom:2px solid #217346;border-right:1px solid #9b9b9b}
.sh.s18x{width:63px;border-left:none;padding-left:13px}
.sh.s1x{width:80px;border-right:1px solid #9b9b9b;padding-left:12px}
.plus{width:20px;height:20px;margin:4px 0 0 32px;border:1px solid #888;border-radius:50%;background:linear-gradient(#777,#777) center/10px 1.500px no-repeat,linear-gradient(#777,#777) center/1.500px 10px no-repeat}
.g2{margin:8px 0 0 495px;width:4px}
.hscroll{width:729px;height:19px;margin:4px 0 0 14px;background:#dadada;display:flex}
.hscroll .btn{width:19px}.hscroll .thumb{width:654px}.hscroll .end{margin-left:auto}
.l2{transform:rotate(90deg)}.r2{transform:rotate(-90deg)}
.status{height:26px;flex:none;background:#f3f2f1;display:flex;align-items:center;font-size:12.500px;padding-left:10px}
.rcs{margin-left:24px}.ds{margin:0 2px 0 1324px}.vv1{margin-left:39px}.vv2{margin-left:33px}.mn{margin-left:24px;color:#999}
.zoom{width:125px;height:12px;margin-left:7px;background:linear-gradient(#555,#555) center/100% 1.500px no-repeat,linear-gradient(#555,#555) center/2px 9px no-repeat}
.pl{width:10px;height:10px;margin-left:6px;background:linear-gradient(#999,#999) center/10px 1px no-repeat,linear-gradient(#999,#999) center/1px 10px no-repeat}
.pct{margin-left:17px;color:#b1afae}

.taskbar{display:flex;flex:none;background:#202020}
.left{height:60px;border-bottom:1px solid #121212;padding-left:383px}
.right{height:48px;background:#2a2a2a;border-bottom:1px solid #3a2a32;padding-left:498px}
.apps{display:flex}
.app{position:relative;display:flex;align-items:center;justify-content:center}
.left .app{width:55px;height:60px}.right .app{width:44px;height:48px}
.left .active{background:#2d2d2d;border:1px solid #3a3a3a;border-radius:6px;height:50px;width:46px;margin:5px 4px;box-shadow:3px 0 0 -1px #343434}
.right .active{background:#343434;border:1px solid #404040;border-radius:5px;height:40px;width:37px;margin:4px 3px}
.dot{position:absolute;bottom:5px;width:7px;height:4px;border-radius:2px;background:#999}
.right .dot{bottom:4px;width:6px;height:3px}
.active .dot{bottom:1px;width:19px;background:#4cc2ff}.right .active .dot{bottom:0;width:16px}
.badge{position:absolute;background:#ffc20e;border-radius:50%;width:66%;padding-top:66%;right:-16%;top:-24%}
.letter{position:absolute;right:-18%;top:-3%;width:62%;height:48%;overflow:hidden;background:#efb878;display:block}
.letter:after{content:"";position:absolute;left:50%;top:-20%;width:64%;height:84%;transform:translateX(-50%) rotate(45deg);border:solid #fff;border-width:0 1.500px 1.500px 0}
.wrap{position:relative}
.tray{display:flex;align-items:center;margin-left:33px;color:#fff;font-size:14.500px;width:349px}
.tray .cl{margin-left:21px}
.lang{display:flex;flex-direction:column;align-items:center;line-height:20px;margin:0 22px 0 23px;width:28px}
.lang+svg,.lang+svg+svg{margin-right:11px}
.clock{display:flex;flex-direction:column;align-items:flex-end;line-height:20px;width:76px;margin-left:7px}
.count{width:20px;height:20px;border-radius:50%;background:#4cc2ff;color:#111;font-weight:400;font-size:13px;line-height:20px;text-align:center;margin-left:9px;flex:none}

.dialog{position:absolute;z-index:2;left:778px;top:451px;width:382px;height:186px;border:1px solid #aaa;border-radius:9px;background:#fff;overflow:visible;box-shadow:0 34px 64px rgba(0,0,0,.42),0 4px 44px rgba(0,0,0,.25);color:#000;display:flex;flex-direction:column}
.dialog header{height:38px;display:flex;justify-content:space-between;align-items:center;padding:0 15px 0 10px;font-size:14px}
.dialog p{height:84px;padding:32px 0 0 14px;font-size:13.800px}
.dialog footer{flex:1;background:#f0f0f0;border-radius:0 0 8px 8px;display:flex;justify-content:flex-end;padding:16px 23px 0 0}
.dialog button{width:98px;height:31px;background:#fdfdfd;border:1.500px solid #0078d4;border-radius:4px;padding:1px;font:13.500px "Open Sans",sans-serif}
.dialog button span{display:block;border:1px dotted #000;height:26px;line-height:24px}

.paint{background:#f7f7f7;color:#222}
.ptitle{height:34px;flex:none;background:#f3f3f3;display:flex;align-items:center;padding:0 19px 3px 16px;gap:15px;font-size:11.700px;color:#000}
.wb{margin-left:auto;display:flex;gap:36px;color:#8a8a8a;margin-top:-3px}
.pmenu{height:46px;flex:none;background:#f3f3f3;border-bottom:1px solid #e6e6e6;display:flex;align-items:center;padding-left:14px;font-size:12.500px}
.pf{width:49px}.pv{width:46px}
.ps{height:31px;width:46px;border:solid #e2e2e2;border-width:0 1px;display:flex;align-items:center;justify-content:center;margin-top:-4px}
.pu{margin:-5px 0 0 16px}.pr{margin:-5px 0 0 24px;transform:scaleX(-1);color:#aaa}
.fbk{margin:-4px 11px 0 auto}
.pribbon{height:111px;flex:none;background:#f9f9f9;border-bottom:1px solid #e6e6e6;display:flex;padding-top:4px;color:#999}
.pg{height:102px;border-right:1px solid #e5e5e5;display:flex;flex-direction:column}
.pg footer{margin-top:auto;text-align:center;font-size:11.800px;line-height:20px;color:#5c5c5c}
.p1{width:105px}.p2{width:153px}.p3{width:137px}.p4{width:68px}.p5{width:277px}.p6{width:57px}.p7{width:376px;border:none}
.two{display:flex;height:80px;margin-top:-1px}
.p1 .two{padding-left:10px}.p2 .two{padding-left:12px}.p3 .two{padding-left:8px}.p4 .two,.p6 .two{justify-content:center}.p5 .two{padding-left:12px}.p7 .two{padding-left:20px}
.tall{width:44px;display:flex;flex-direction:column;align-items:center;padding-top:20px}
.cv{margin-top:10px}
.col{width:44px}.col.w48{width:48px}.col.w32{width:32px}.col.w9{width:9px}.col.w9b{width:9px;margin-left:-8px}.col.w40{width:40px}
.col{display:grid;grid-template-rows:40px 40px;place-items:center}
.select{width:32px;height:49px;margin-top:16px;border:1px solid #0a4a94;border-radius:4px;display:flex;flex-direction:column;align-items:center;background:linear-gradient(#b5b5b5,#b5b5b5) 1px 30px/28px 1px no-repeat #f3f3f3}
.select i{width:22px;height:23px;border:1.500px dashed #222;margin:4px 0;background:#f0f0f0}
.select svg{margin-top:4px}
.shapes{width:196px;height:72px;margin-top:4px;border:1px solid #e4e4e4;border-radius:6px;display:grid;grid-template:repeat(3,22px)/repeat(8,22px);padding:2px 0 0 7px;place-items:center}
.shapes svg{fill:none;stroke:#222;stroke-width:1.100}
.fgbg{width:48px;display:flex;flex-direction:column;align-items:center;margin-left:-8px}
.fgbg i{width:30px;height:30px;margin-top:6px;border-radius:50%;border:1.500px solid #1a56a5;background:radial-gradient(#000 11.500px,transparent 12px)}
.fgbg u{width:25px;height:25px;margin-top:8px;border-radius:50%;border:1px solid #888;background:#fff}
.swatches{display:grid;grid-template:repeat(3,24px)/repeat(10,24px);place-items:center;margin:4px 0 0 8px;height:72px}
.swatches i{width:16px;height:16px;border-radius:50%;border:1px solid rgba(90,90,90,.65)}
.swatches .none{border-color:#a9a9a9}
.wheel{width:24px;height:24px;border-radius:50%;margin:29px 0 0 19px;background:radial-gradient(#fff,rgba(255,255,255,0) 70%),conic-gradient(from 20deg,#fe0,#5f5,#0ff,#00f,#f0f,#f00,#fe0);position:relative}
.wheel i{position:absolute;left:15px;top:-3px;width:12px;height:12px;border-radius:50%;border:1px solid #666;background:linear-gradient(#777,#777) center/7px 1px no-repeat,linear-gradient(#777,#777) center/1px 7px no-repeat,#fff}
.stage{height:809px;flex:none;padding:40px}
.canvas{position:relative;width:1000px;height:407px;background:#fff;box-shadow:0 3px 8px rgba(0,0,0,.09);padding:16px 0 0 167px}
#picture{width:612px;border-top:1px solid #d4d4d4;border-left:1px solid #d4d4d4}
.h{position:absolute;width:5px;height:5px;border:1px solid #555;background:#fff}
.hb{left:498px;bottom:-5px}.hr{right:-4px;top:201px}.hc{right:-4px;bottom:-5px}
.pstatus{height:32px;flex:none;background:#f3f3f3;border-top:1px solid #e6e6e6;display:flex;align-items:center;font-size:11.800px}
.pstatus>span{height:16px;display:flex;align-items:center;border-right:1px solid #dadada;gap:8px}
.z1{width:139px;padding-left:18px}.z2{width:137px;padding-left:12px}.z3{width:135px;padding-left:11px}.pstatus>.z4{border:none;padding-left:13px}
.pz{margin-left:auto;display:flex;align-items:center;width:259px}
.pz svg{margin:0 15px 0 23px}
.slider{width:131px;height:4px;border-radius:2px;background:linear-gradient(90deg,#0067c0 50px,#8a8a8a 50px);display:flex;align-items:center}
.slider i{width:20px;height:20px;border-radius:50%;margin-left:40px;background:radial-gradient(#0067c0 5px,#fff 5.500px);box-shadow:0 0 1px #888}
.pz .pl{margin-left:15px;background:linear-gradient(#222,#222) center/10px 1px no-repeat,linear-gradient(#222,#222) center/1px 10px no-repeat}
```
FILE: main.js
```js
// Spreadsheet contents: ticker, volume, return
const y2017 = [["AY","136,070,900","8.9%"],["CSIQ","310,592,800","33.1%"],["DQ","35,796,200","199.4%"],["ENPH","221,772,100","129.5%"],["FSLR","684,181,400","101.3%"],["HASI","80,949,300","25.8%"],["JKS","191,632,200","53.9%"],["RUN","267,681,300","5.5%"],["SEDG","206,885,200","184.5%"],["SPWR","782,187,000","23.1%"],["TERP","139,402,800","-7.2%"],["VSLR","109,487,900","50.0%"]];
const y2018 = [["AY","83,079,900","-7.3%"],["CSIQ","200,879,900","-16.3%"],["DQ","107,873,900","-62.6%"],["ENPH","607,473,500","81.9%"],["FSLR","478,113,900","-39.7%"],["HASI","104,340,600","-20.7%"],["JKS","158,309,000","-60.5%"],["RUN","502,757,100","84.0%"],["SEDG","237,212,300","-7.8%"],["SPWR","538,024,300","-44.6%"],["TERP","151,434,700","-5.0%"],["VSLR","136,539,100","-3.5%"]];
const fit = (t, w) => `<span data-w="${w}">${t}</span>`;

function rowsFor(year, data) {
  const rows = [
    { c: "big-row", h: `<td>${fit(`All Stocks (${year})`, 136)}</td><td>${fit("Ticker", 50)}</td><td>${fit("Total Daily Volume", 159)}</td><td>${fit("Return", 57)}</td>` },
    { c: "", h: "<td></td><td></td><td></td><td></td>" },
    { c: "head", h: `<td class="u">${fit("Ticker", 45)}</td><td class="u">${fit("Total Daily Volume", 142)}</td><td class="u">${fit("Return", 51)}</td><td></td>` }
  ];
  data.forEach(([t, v, r]) => {
    const s = r[0] === "-" ? "loss" : "gain";
    rows.push({ c: "", h: `<td>${t}</td><td class="num b${s}">${v}</td><td class="num ${s}">${r}</td><td></td>` });
  });
  return rows;
}

const col = w => `<col style="width:${w}px">`;
const widths = [165, 152, 214, 80];
let html = "<colgroup>" + [34, ...widths, ...Array(16).fill(80)].map(col).join("") + "</colgroup>";
html += '<tr class="cols"><th class="corner"></th>' + [..."ABCDEFGHIJKLMNOPQRST"].map(l => `<th class="${l === "H" ? "sel" : ""}">${l}</th>`).join("") + "</tr>";
const body = rowsFor(2017, y2017);
for (let n = 1; n <= 27; n++) {
  const r = body[n - 1] || { c: "", h: "<td></td>".repeat(4) };
  html += `<tr class="${r.c}"><th class="rn ${n === 9 ? "sel" : ""}">${n}</th>${r.h}${"<td></td>".repeat(16)}</tr>`;
}
document.getElementById("sheet").innerHTML = html;
document.getElementById("picture").innerHTML = "<colgroup>" + widths.map(col).join("") + "</colgroup>" +
  rowsFor(2018, y2018).map(r => `<tr class="${r.c}">${r.h}</tr>`).join("");

// Paint galleries
document.getElementById("shapes").innerHTML = Array.from({ length: 23 }, (_, i) => `<svg width="17" height="17"><use href="#s${i}"/></svg>`).join("");
const colours = ["#000","#7f7f7f","#880015","#ed1c24","#ff7f27","#fff200","#22b14c","#00a2e8","#3f48cc","#a349a4","#fff","#c3c3c3","#c3c3c3","#ffaec9","#ffc90e","#efe4b0","#b5e61d","#99d9ea","#7092be","#c8bfe7"];
document.getElementById("swatches").innerHTML = colours.map(c => `<i style="background:${c}"></i>`).join("") + '<i class="none"></i>'.repeat(10);

// Pinned and running apps, the same on both taskbars
const apps = ["t-win","t-search","t-view","t-widg","t-chat","t-arch","t-fold*","t-store","t-edge*","t-help","t-mc","t-note*","t-out*","t-slack*","t-qdoc*","t-zoom*","t-prn*","t-set*","t-code*","ppal*","t-xl*"];
document.querySelectorAll(".apps").forEach(bar => {
  const s = bar.dataset.size;
  bar.innerHTML = apps.map(a => {
    const id = a.replace("*", "");
    const extra = id === "t-help" ? '<i class="badge"></i>' : id === "t-out" ? '<i class="letter"></i>' : "";
    return `<div class="app ${id === "t-xl" ? "active" : ""}"><div class="wrap"><svg width="${s}" height="${s}"><use href="#${id}"/></svg>${extra}</div>${a.endsWith("*") ? '<i class="dot"></i>' : ""}</div>`;
  }).join("");
});

// Track each label so that it fills its nominal width
document.querySelectorAll("[data-w]").forEach(el => {
  el.style.letterSpacing = "0px";
  const range = document.createRange();
  range.selectNodeContents(el);
  const natural = range.getBoundingClientRect().width;
  const n = el.textContent.length;
  el.style.letterSpacing = ((+el.dataset.w - natural) / n).toFixed(3) + "px";
});
```
